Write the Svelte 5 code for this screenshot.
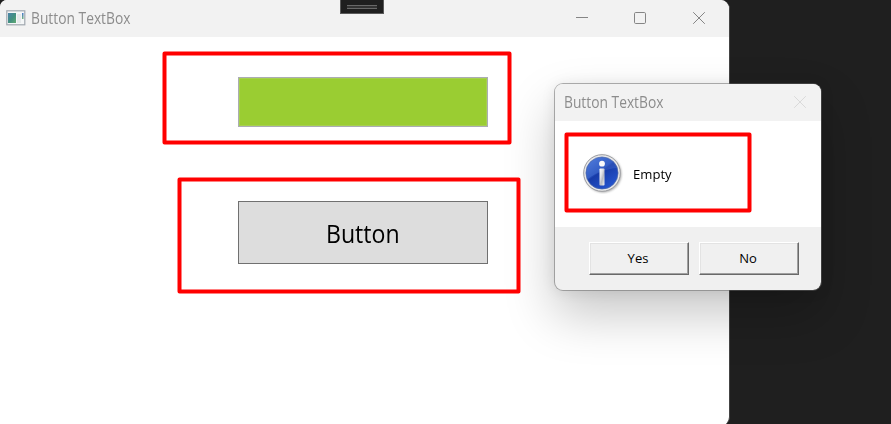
<script>
  const marks = [
    { x: 164.5, y: 53.5, w: 345, h: 89 },
    { x: 179.5, y: 179.5, w: 339, h: 112 },
    { x: 566.5, y: 134.5, w: 183, h: 76 }
  ];
</script>

<main class="desktop">
  <section class="window">
    <header class="titlebar">
      <svg class="app-icon" width="20" height="16" viewBox="0 0 20 16">
        <defs>
          <linearGradient id="icon-pane" x1="0" y1="0" x2="1" y2="1">
            <stop offset="0" stop-color="#4b83aa" />
            <stop offset=".55" stop-color="#429080" />
            <stop offset="1" stop-color="#63ab73" />
          </linearGradient>
          <linearGradient id="icon-stripe" x1="0" y1="0" x2="0" y2="1">
            <stop offset="0" stop-color="#4778cf" />
            <stop offset="1" stop-color="#72b27a" />
          </linearGradient>
        </defs>
        <rect x=".8" y=".8" width="18" height="14" fill="#f4f6f7" stroke="#a1a8b0" stroke-width="1.2" />
        <rect x="2" y="3" width="8" height="10" fill="url(#icon-pane)" />
        <rect x="11" y="4" width="4" height="9" fill="#e5e9ea" />
        <rect x="16" y="3" width="1.5" height="6" fill="url(#icon-stripe)" />
      </svg>
      <span class="title">Button TextBox</span>
      <svg class="controls" width="132" height="14" viewBox="0 0 132 14" fill="none" stroke="#858585">
        <path d="M1 6.5H13" />
        <rect x="59.5" y="1.5" width="11" height="11" rx="1.2" />
        <path d="M118.2 1.2L129.8 12.8M129.8 1.2L118.2 12.8" />
      </svg>
    </header>
    <div class="form">
      <div class="textbox"></div>
      <button class="push"><span>Button</span></button>
    </div>
  </section>

  <div class="grip"><i></i></div>

  <section class="dialog">
    <header class="dialog-title">
      <span class="title">Button TextBox</span>
      <svg width="14" height="14" viewBox="0 0 14 14" fill="none" stroke="#dadada">
        <path d="M1.2 1.2L12.8 12.8M12.8 1.2L1.2 12.8" />
      </svg>
    </header>
    <div class="message">
      <svg width="42" height="42" viewBox="0 0 42 42">
        <defs>
          <linearGradient id="blue" x1="0" y1="0" x2=".7" y2="1">
            <stop offset="0" stop-color="#4c78da" />
            <stop offset=".48" stop-color="#2650bd" />
            <stop offset=".53" stop-color="#173ba8" />
            <stop offset="1" stop-color="#2555cf" />
          </linearGradient>
          <linearGradient id="stem" x1="0" y1="0" x2="1" y2="1">
            <stop offset="0" stop-color="#fff" />
            <stop offset=".35" stop-color="#e2e3e8" />
            <stop offset=".6" stop-color="#b7b9c1" />
            <stop offset="1" stop-color="#f2f2f4" />
          </linearGradient>
          <filter id="soft" x="-20%" y="-20%" width="140%" height="140%">
            <feGaussianBlur stdDeviation=".9" />
          </filter>
        </defs>
        <circle cx="21" cy="22" r="18.4" fill="#777" opacity=".65" filter="url(#soft)" />
        <circle cx="20" cy="21" r="18.3" fill="#e9e9e9" stroke="#9c9da2" stroke-width="1" />
        <circle cx="20" cy="21" r="16.1" fill="url(#blue)" stroke="#5870a9" stroke-width=".7" />
        <path d="M4.5 22A15.7 15.7 0 0 1 35 16C27 16 13 21 6 27Q4.7 25 4.5 22Z" fill="#7599ea" opacity=".2" />
        <circle cx="20" cy="11.7" r="2.9" fill="#fafafa" />
        <rect x="17.5" y="16.5" width="5" height="17" rx=".8" fill="url(#stem)" />
      </svg>
      <span>Empty</span>
    </div>
    <footer>
      <button class="classic yes"><span>Yes</span></button>
      <button class="classic no"><span>No</span></button>
    </footer>
  </section>

  <svg class="marks" width="891" height="424" fill="none" stroke="#f00" stroke-width="4" stroke-linejoin="round">
    {#each marks as m}
      <rect x={m.x} y={m.y} width={m.w} height={m.h} />
    {/each}
  </svg>
</main>

<style>
  .desktop {
    position: relative;
    width: 891px;
    height: 424px;
    overflow: hidden;
    background: #1f1f1f;
    font-family: "Open Sans", "Noto Sans", sans-serif;
  }
  .window {
    box-sizing: border-box;
    width: 730px;
    height: 426px;
    overflow: hidden;
    border-right: 1px solid #444;
    border-radius: 7px 9px 9px 0;
    background: #fff;
  }
  .titlebar {
    display: flex;
    align-items: center;
    box-sizing: border-box;
    height: 37px;
    padding: 0 22px 1px 6px;
    background: #f2f2f2;
  }
  .app-icon { margin-right: 5px; }
  .title {
    display: block;
    color: #8c8c8c;
    font-size: 15.5px;
    line-height: 20px;
    white-space: nowrap;
    transform: scaleX(.89);
    transform-origin: left;
  }
  .controls { margin-left: auto; }
  .form {
    display: flex;
    flex-direction: column;
    gap: 74px;
    padding: 40px 0 0 238px;
  }
  .textbox {
    box-sizing: border-box;
    width: 250px;
    height: 50px;
    border: 1px solid #abadb3;
    background: #9acd32;
    box-shadow: inset 0 0 0 1px #a7d04f;
  }
  button {
    display: flex;
    align-items: center;
    justify-content: center;
    box-sizing: border-box;
    margin: 0;
    padding: 0;
    border-radius: 0;
    color: #000;
    font-family: inherit;
  }
  .push {
    width: 250px;
    height: 63px;
    padding-top: 1px;
    border: 1px solid #707070;
    background: #ddd;
    font-size: 25px;
  }
  .push span { transform: scaleX(.925); }
  .grip {
    position: absolute;
    top: 0;
    left: 340px;
    box-sizing: border-box;
    width: 44px;
    height: 14px;
    padding: 5px 6px 0;
    border: 1px solid #5a5a5a;
    border-top: 0;
    background: #1f1f1f;
  }
  .grip i {
    display: block;
    height: 2px;
    border: solid #686868;
    border-width: 1px 0;
    background: #333;
  }
  .dialog {
    position: absolute;
    top: 83px;
    left: 554px;
    box-sizing: border-box;
    width: 268px;
    height: 208px;
    border: 1px solid rgba(100, 100, 100, .5);
    border-radius: 9px;
    background: #f0f0f0;
    background-clip: padding-box;
    box-shadow: 0 24px 50px rgba(0, 0, 0, .22), 0 1px 14px rgba(0, 0, 0, .08);
  }
  .dialog-title {
    display: flex;
    align-items: center;
    justify-content: space-between;
    box-sizing: border-box;
    height: 37px;
    padding: 0 14px 1px 9px;
    border-radius: 8px 8px 0 0;
    background: #f2f2f2;
  }
  .message {
    display: flex;
    align-items: center;
    box-sizing: border-box;
    height: 106px;
    padding: 0 0 2px 27px;
    background: #fff;
    color: #000;
    font-size: 13.5px;
  }
  .message svg { margin-right: 9px; }
  .message span {
    padding-top: 2px;
    transform: scaleX(.97);
    transform-origin: left;
  }
  footer {
    display: flex;
    gap: 10px;
    padding: 15px 0 0 34px;
  }
  .classic {
    width: 100px;
    height: 33px;
    padding: 0 2px 1px 0;
    border: 1px solid;
    border-color: #fff #696969 #696969 #fff;
    background: #f0f0f0;
    box-shadow: inset -1px -1px #a0a0a0, inset 1px 1px #e3e3e3;
    font-size: 13px;
  }
  .marks {
    position: absolute;
    inset: 0;
    pointer-events: none;
  }
</style>
